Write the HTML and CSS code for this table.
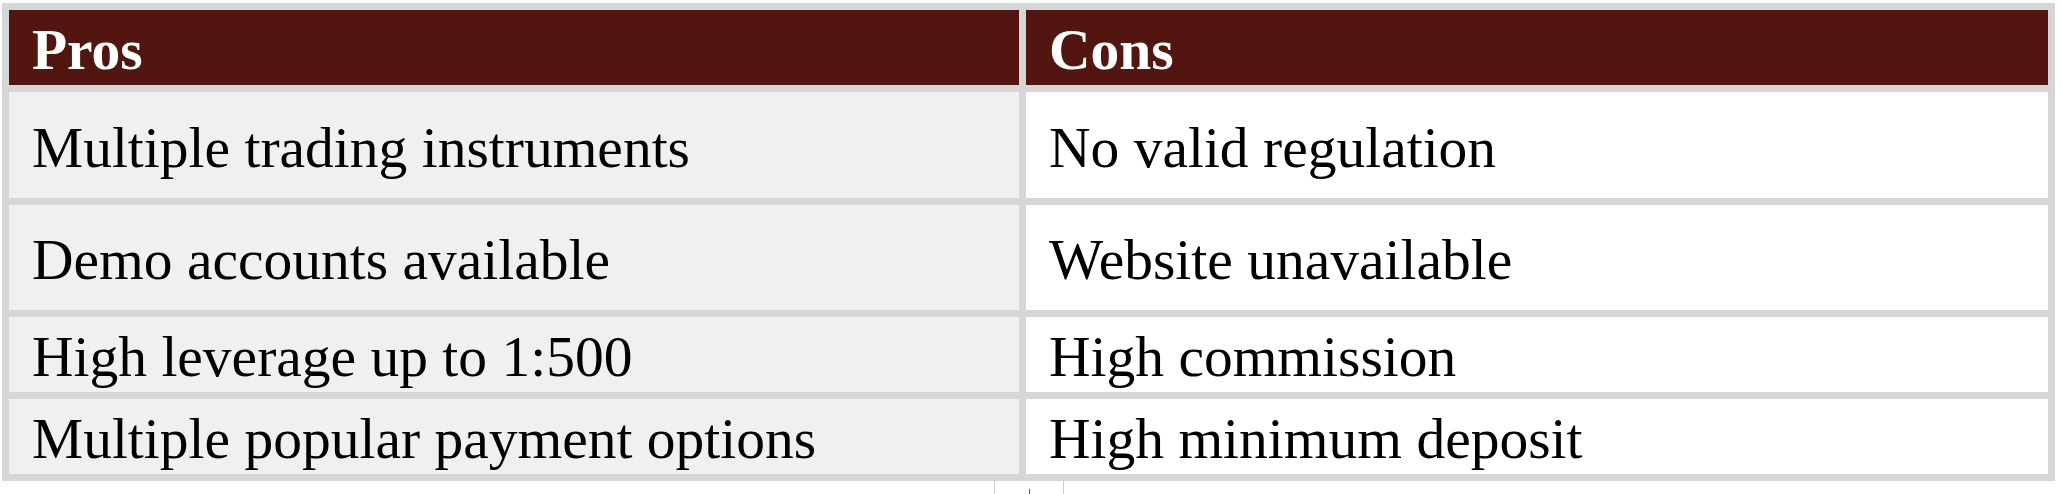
FILE: index.html
```html
<!DOCTYPE html>
<html>
<head>
<meta charset="utf-8">
<link rel="stylesheet" href="styles.css">
</head>
<body>
<table class="pc">
  <colgroup><col class="c-left"><col class="c-right"></colgroup>
  <thead>
    <tr class="r-head"><th>Pros</th><th>Cons</th></tr>
  </thead>
  <tbody>
    <tr class="r-tall"><td>Multiple trading instruments</td><td>No valid regulation</td></tr>
    <tr class="r-tall2"><td>Demo accounts available</td><td>Website unavailable</td></tr>
    <tr class="r-short"><td>High leverage up to 1:500</td><td>High commission</td></tr>
    <tr class="r-short"><td>Multiple popular payment options</td><td>High minimum deposit</td></tr>
  </tbody>
</table>
<div class="handle"><span class="tick"></span></div>
</body>
</html>
```
FILE: styles.css
```css
html, body {
  margin: 0;
  padding: 0;
  background: #ffffff;
}
body {
  font-family: "Liberation Serif", "Times New Roman", serif;
}
.pc {
  margin: 3px 0 0 2px;
  width: 2053px;
  border-collapse: separate;
  border-spacing: 7px;
  background: #d6d6d6;
  table-layout: fixed;
  font-size: 57.5px;
  line-height: 1.1;
}
.c-left { width: 1010px; }
.c-right { width: 1022px; }
.pc th, .pc td {
  padding: 5px 23px 0;
  text-align: left;
  vertical-align: middle;
  white-space: nowrap;
}
.pc th {
  background: #52150f;
  color: #ffffff;
  font-weight: bold;
}
.pc td { color: #000000; }
.pc td:first-child { background: #f0f0f0; }
.pc td:last-child { background: #ffffff; }
.r-head { height: 75px; }
.r-tall { height: 106px; }
.r-tall2 { height: 105px; }
.r-short { height: 75px; }
.handle {
  margin-left: 994px;
  width: 68px;
  height: 13px;
  border-left: 1px solid #cfcfcf;
  border-right: 1px solid #cfcfcf;
  display: flex;
  justify-content: center;
  align-items: flex-end;
}
.tick {
  width: 1px;
  height: 5px;
  background: #555;
}
```
